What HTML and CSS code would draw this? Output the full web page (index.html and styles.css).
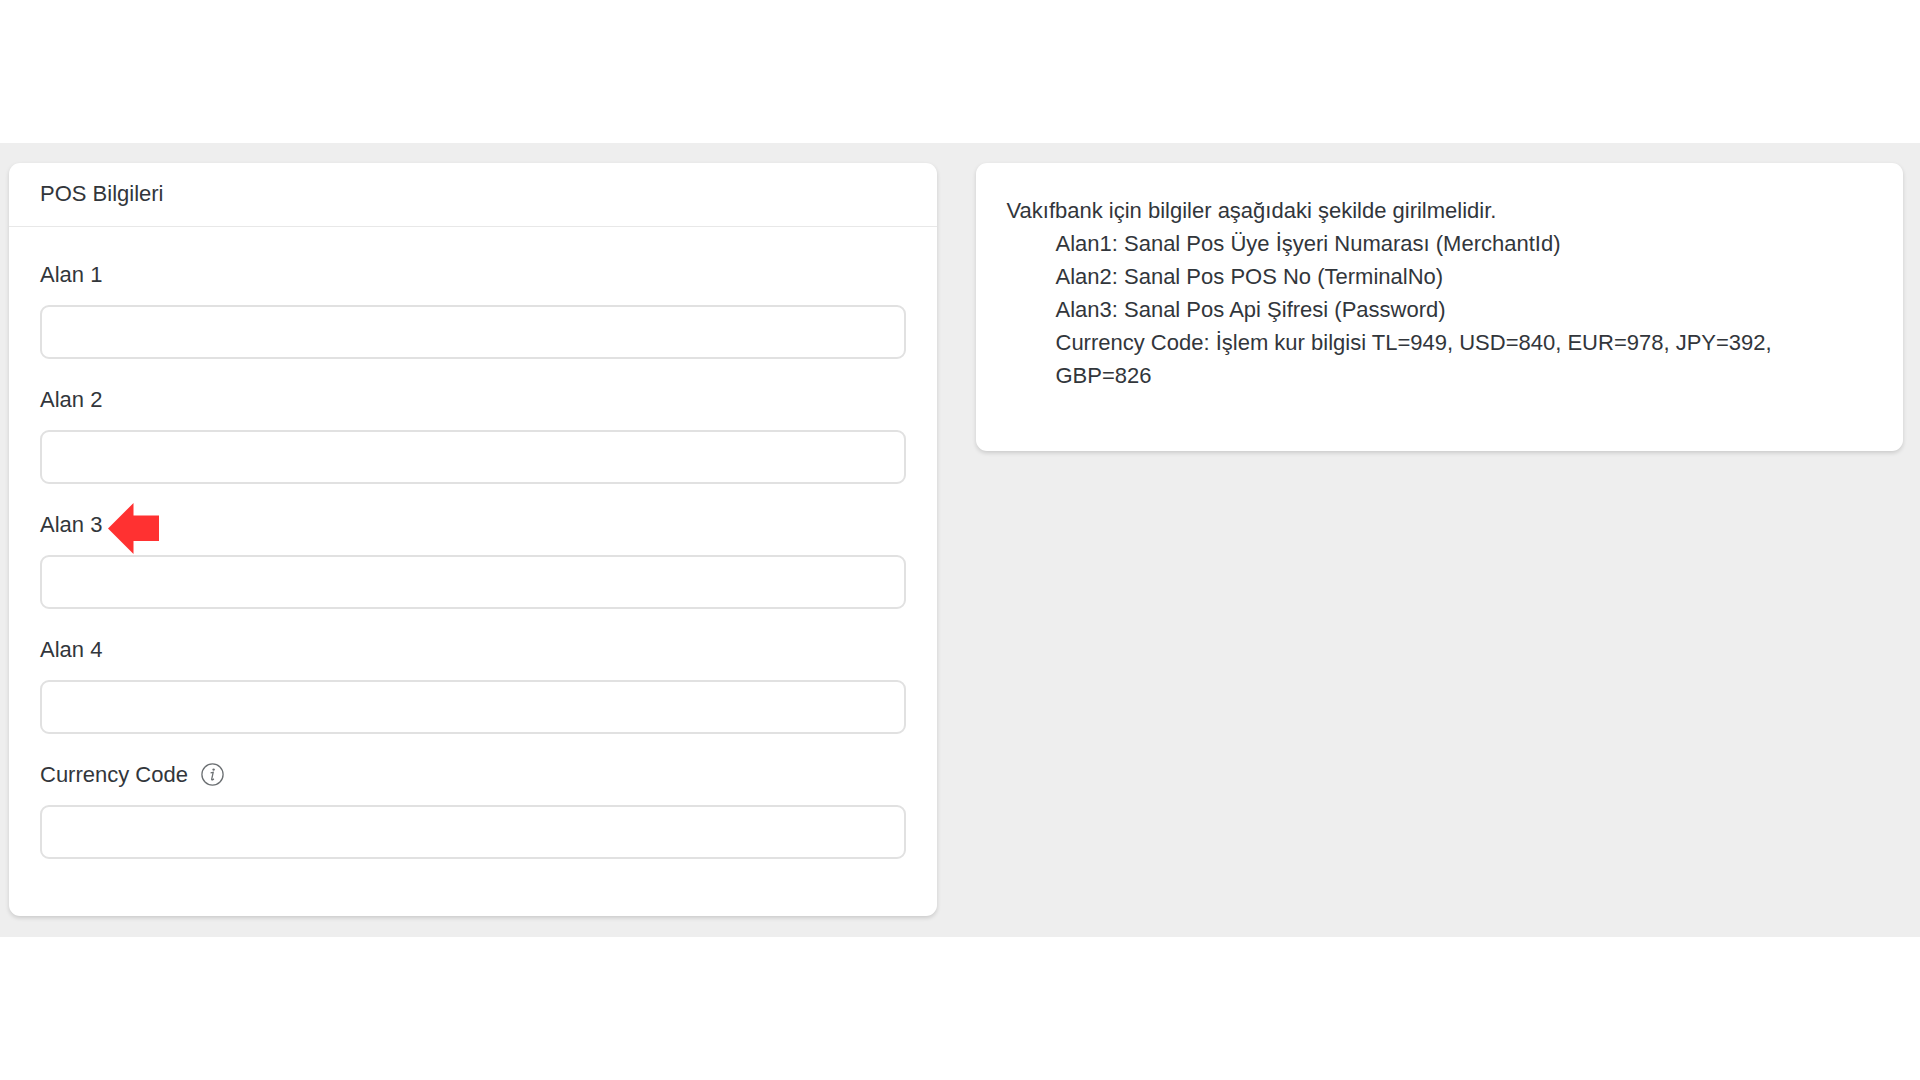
FILE: index.html
```html
<!DOCTYPE html>
<html lang="tr">
  <head>
    <meta charset="UTF-8" />
    <meta name="viewport" content="width=device-width, initial-scale=1.0" />
    <title>POS Bilgileri</title>
    <link rel="stylesheet" href="styles.css">
  </head>
  <body>
    <main class="container">
      <form class="card">
        <h1 class="card-header">POS Bilgileri</h1>
        <div class="card-body">
          <div class="form-group">
            <label for="alan1">Alan 1</label>
            <input type="text" id="alan1" />
          </div>
          <div class="form-group">
            <label for="alan2">Alan 2</label>
            <input type="text" id="alan2" />
          </div>
          <div class="form-group">
            <label for="alan3">
              Alan 3
              <svg class="arrow" viewBox="0 0 51 51" aria-hidden="true">
                <path d="M0 25.5 25.5 0V12.5H51V38H25.5V51Z" fill="#ff3131" />
              </svg>
            </label>
            <input type="text" id="alan3" />
          </div>
          <div class="form-group">
            <label for="alan4">Alan 4</label>
            <input type="text" id="alan4" />
          </div>
          <div class="form-group">
            <label for="currency">
              Currency Code
              <svg class="info" viewBox="0 0 23 23" fill="none" stroke="currentColor" aria-hidden="true">
                <circle cx="11.5" cy="11.5" r="10.6" stroke-width="1.3" />
                <circle cx="12.6" cy="6.6" r="1.2" fill="currentColor" stroke="none" />
                <path d="M9.6 9.8 12.2 9.4 10.7 16.2Q10.6 17.2 11.5 16.9L12.9 15.9" stroke-width="1.3" />
              </svg>
            </label>
            <input type="text" id="currency" />
          </div>
        </div>
      </form>

      <section class="card">
        <div class="card-body">
          <p>Vakıfbank için bilgiler aşağıdaki şekilde girilmelidir.</p>
          <ul class="fields">
            <li>Alan1: Sanal Pos Üye İşyeri Numarası (MerchantId)</li>
            <li>Alan2: Sanal Pos POS No (TerminalNo)</li>
            <li>Alan3: Sanal Pos Api Şifresi (Password)</li>
            <li>Currency Code: İşlem kur bilgisi TL=949, USD=840, EUR=978, JPY=392, GBP=826</li>
          </ul>
        </div>
      </section>
    </main>
  </body>
</html>
```
FILE: styles.css
```css
* {
  box-sizing: border-box;
}

body {
  display: flex;
  flex-direction: column;
  justify-content: center;
  min-height: 100vh;
  margin: 0;
  background-color: #fff;
  color: #32363b;
  font-family: "Liberation Sans", Arial, sans-serif;
  font-size: 22px;
  line-height: 33px;
}

.container {
  display: grid;
  grid-template-columns: 1fr 1fr;
  align-items: start;
  gap: 39px;
  padding: 20px 17px 21px 9px;
  background-color: #eee;
}

.card {
  background-color: #fff;
  border-radius: 11px;
  box-shadow: 0 2px 4px rgba(0, 0, 0, 0.15);
}

.card-header {
  margin: 0;
  padding: 14px 31px 16px;
  border-bottom: 1px solid #e8e8e8;
  font-size: 22px;
  font-weight: normal;
}

.card-body {
  padding: 31px 31px 33px;
}

.card-body p {
  margin: 0;
}

.form-group {
  margin-bottom: 24px;
}

.form-group label {
  position: relative;
  display: flex;
  align-items: center;
  gap: 13px;
  width: fit-content;
  margin-bottom: 14px;
}

.form-group input {
  display: block;
  width: 100%;
  height: 54px;
  padding: 0 16px;
  border: 2px solid #e1e1e1;
  border-radius: 9px;
  background-color: #fff;
  color: inherit;
  font: inherit;
}

.info {
  width: 23px;
  height: 23px;
  color: #6c7073;
}

/* marker that points at the label, larger than the line */
.arrow {
  position: absolute;
  top: -5px;
  left: 100%;
  width: 51px;
  height: 51px;
  margin-left: 6px;
}

.fields {
  margin: 0 0 26px;
  padding-left: 49px;
  list-style: none;
}
```
